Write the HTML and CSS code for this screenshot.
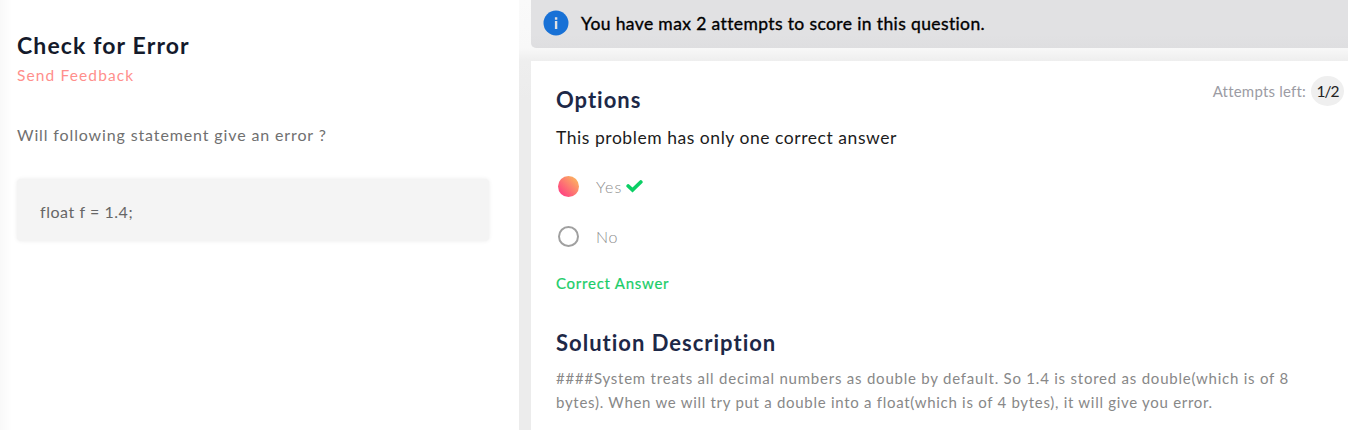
FILE: index.html
```html
<!DOCTYPE html>
<html lang="en">
<head>
<meta charset="utf-8">
<title>Check for Error</title>
<link rel="stylesheet" href="styles.css">
</head>
<body>
<main class="page">
  <section class="problem">
    <h1 class="title">Check for Error</h1>
    <a class="feedback">Send Feedback</a>
    <p class="statement">Will following statement give an error ?</p>
    <pre class="code">float f = 1.4;</pre>
  </section>
  <section class="answer">
    <div class="notice">
      <svg class="info" viewBox="0 0 26 26"><circle cx="13" cy="13" r="12.5" fill="#1871d6"/><path d="M11.9 7.2h2.4v2.5h-2.4zM11.9 11h2.4v8h-2.4z" fill="#e1e1e3"/></svg>
      <span class="notice-text">You have max 2 attempts to score in this question.</span>
    </div>
    <div class="card">
      <header class="card-head">
        <h2 class="heading options">Options</h2>
        <div class="attempts"><span class="attempts-label">Attempts left:</span><span class="count">1/2</span></div>
      </header>
      <p class="hint">This problem has only one correct answer</p>
      <div class="choice"><span class="radio selected"></span><span class="yes">Yes</span><svg class="check" viewBox="0 0 17 14"><path d="M2.2 7 6.5 11 14.8 3" fill="none" stroke="#0bcf65" stroke-width="3.7" stroke-linecap="round"/></svg></div>
      <div class="choice"><span class="radio"></span><span>No</span></div>
      <p class="result">Correct Answer</p>
      <h2 class="heading solution">Solution Description</h2>
      <p class="description">####System treats all decimal numbers as double by default. So 1.4 is stored as double(which is of 8<br><span class="line-two">bytes). When we will try put a double into a float(which is of 4 bytes), it will give you error.</span></p>
    </div>
  </section>
</main>
</body>
</html>
```

FILE: styles.css
```css
* { box-sizing: border-box; }
body { margin: 0; font-family: Lato, "Open Sans", sans-serif; overflow: hidden; }
h1, h2, p, pre { margin: 0; font-family: inherit; white-space: nowrap; }
.page { display: flex; height: 430px; background: #ececec; }
.problem {
  width: 519px; flex: none; padding: 31px 30px 0 17px;
  background: linear-gradient(90deg, #f9f9f9, #fff 12px);
}
.title { font-size: 23px; line-height: 28px; font-weight: 700; color: #141a2b; letter-spacing: 1.13px; }
.feedback { display: block; margin-top: 5px; font-size: 15.5px; line-height: 22px; color: #ff8f8c; letter-spacing: 1.13px; }
.statement { margin-top: 37px; font-size: 16px; line-height: 24px; color: #707070; letter-spacing: .87px; }
.code {
  margin-top: 32px; height: 62px; padding: 21px 23px; border-radius: 4px;
  background: #f4f4f4; box-shadow: 0 0 4px #ececec;
  font-size: 16px; line-height: 24px; color: #666; letter-spacing: .55px;
}
.answer { flex: 1; min-width: 0; padding-left: 12px; background: linear-gradient(#fafafa 0, #f8f8f8 48px, #eee 61px, #ececec 100px); }
.notice {
  display: flex; align-items: center; gap: 12px; height: 48px; padding: 0 12px 2px;
  border-radius: 0 0 0 5px; background: linear-gradient(#e1e1e3 35px, #dedee0); color: #000;
}
.info { width: 26px; height: 26px; }
.notice-text { padding-top: 1px; font-size: 17.5px; line-height: 24px; -webkit-text-stroke: .35px #000; letter-spacing: .38px; white-space: nowrap; }
.card { height: 369px; margin-top: 13px; padding: 15px 4px 0 25px; background: #fff; }
.card-head { display: flex; justify-content: space-between; height: 48px; }
.heading { font-size: 22px; line-height: 30px; font-weight: 700; color: #1d2847; letter-spacing: 1px; }
.options { padding-top: 9px; }
.attempts { display: flex; gap: 5px; height: 30px; align-items: center; font-size: 15px; color: #9c9ca4; letter-spacing: .2px; }
.count { width: 33px; height: 30px; border-radius: 50%; background: #efefef; color: #222; font-size: 15.5px; line-height: 30px; text-align: center; letter-spacing: -1px; }
.hint { margin-top: 2px; font-size: 17.5px; line-height: 24px; color: #1c1c1c; letter-spacing: .55px; }
.choice { display: flex; align-items: center; height: 50px; padding-left: 2px; font-size: 16px; font-weight: 300; color: #8c8c8c; letter-spacing: .6px; }
.yes { letter-spacing: 1.1px; }
.hint + .choice { margin-top: 11px; }
.radio { width: 21px; height: 21px; margin-right: 17px; border: 2px solid #a0a0a0; border-radius: 50%; }
.selected { border: 0; background: linear-gradient(45deg, #ff3d83 10%, #fbb55f 90%); }
.check { width: 17px; height: 14px; margin-left: 4px; }
.result { margin-top: 11px; font-size: 15px; line-height: 22px; color: #1bcd69; letter-spacing: .75px; -webkit-text-stroke: .2px #1bcd69; }
.solution { margin-top: 34px; }
.description { margin-top: 8px; font-size: 15px; line-height: 24px; color: #888; letter-spacing: .775px; }
.line-two { letter-spacing: .71px; }
```
